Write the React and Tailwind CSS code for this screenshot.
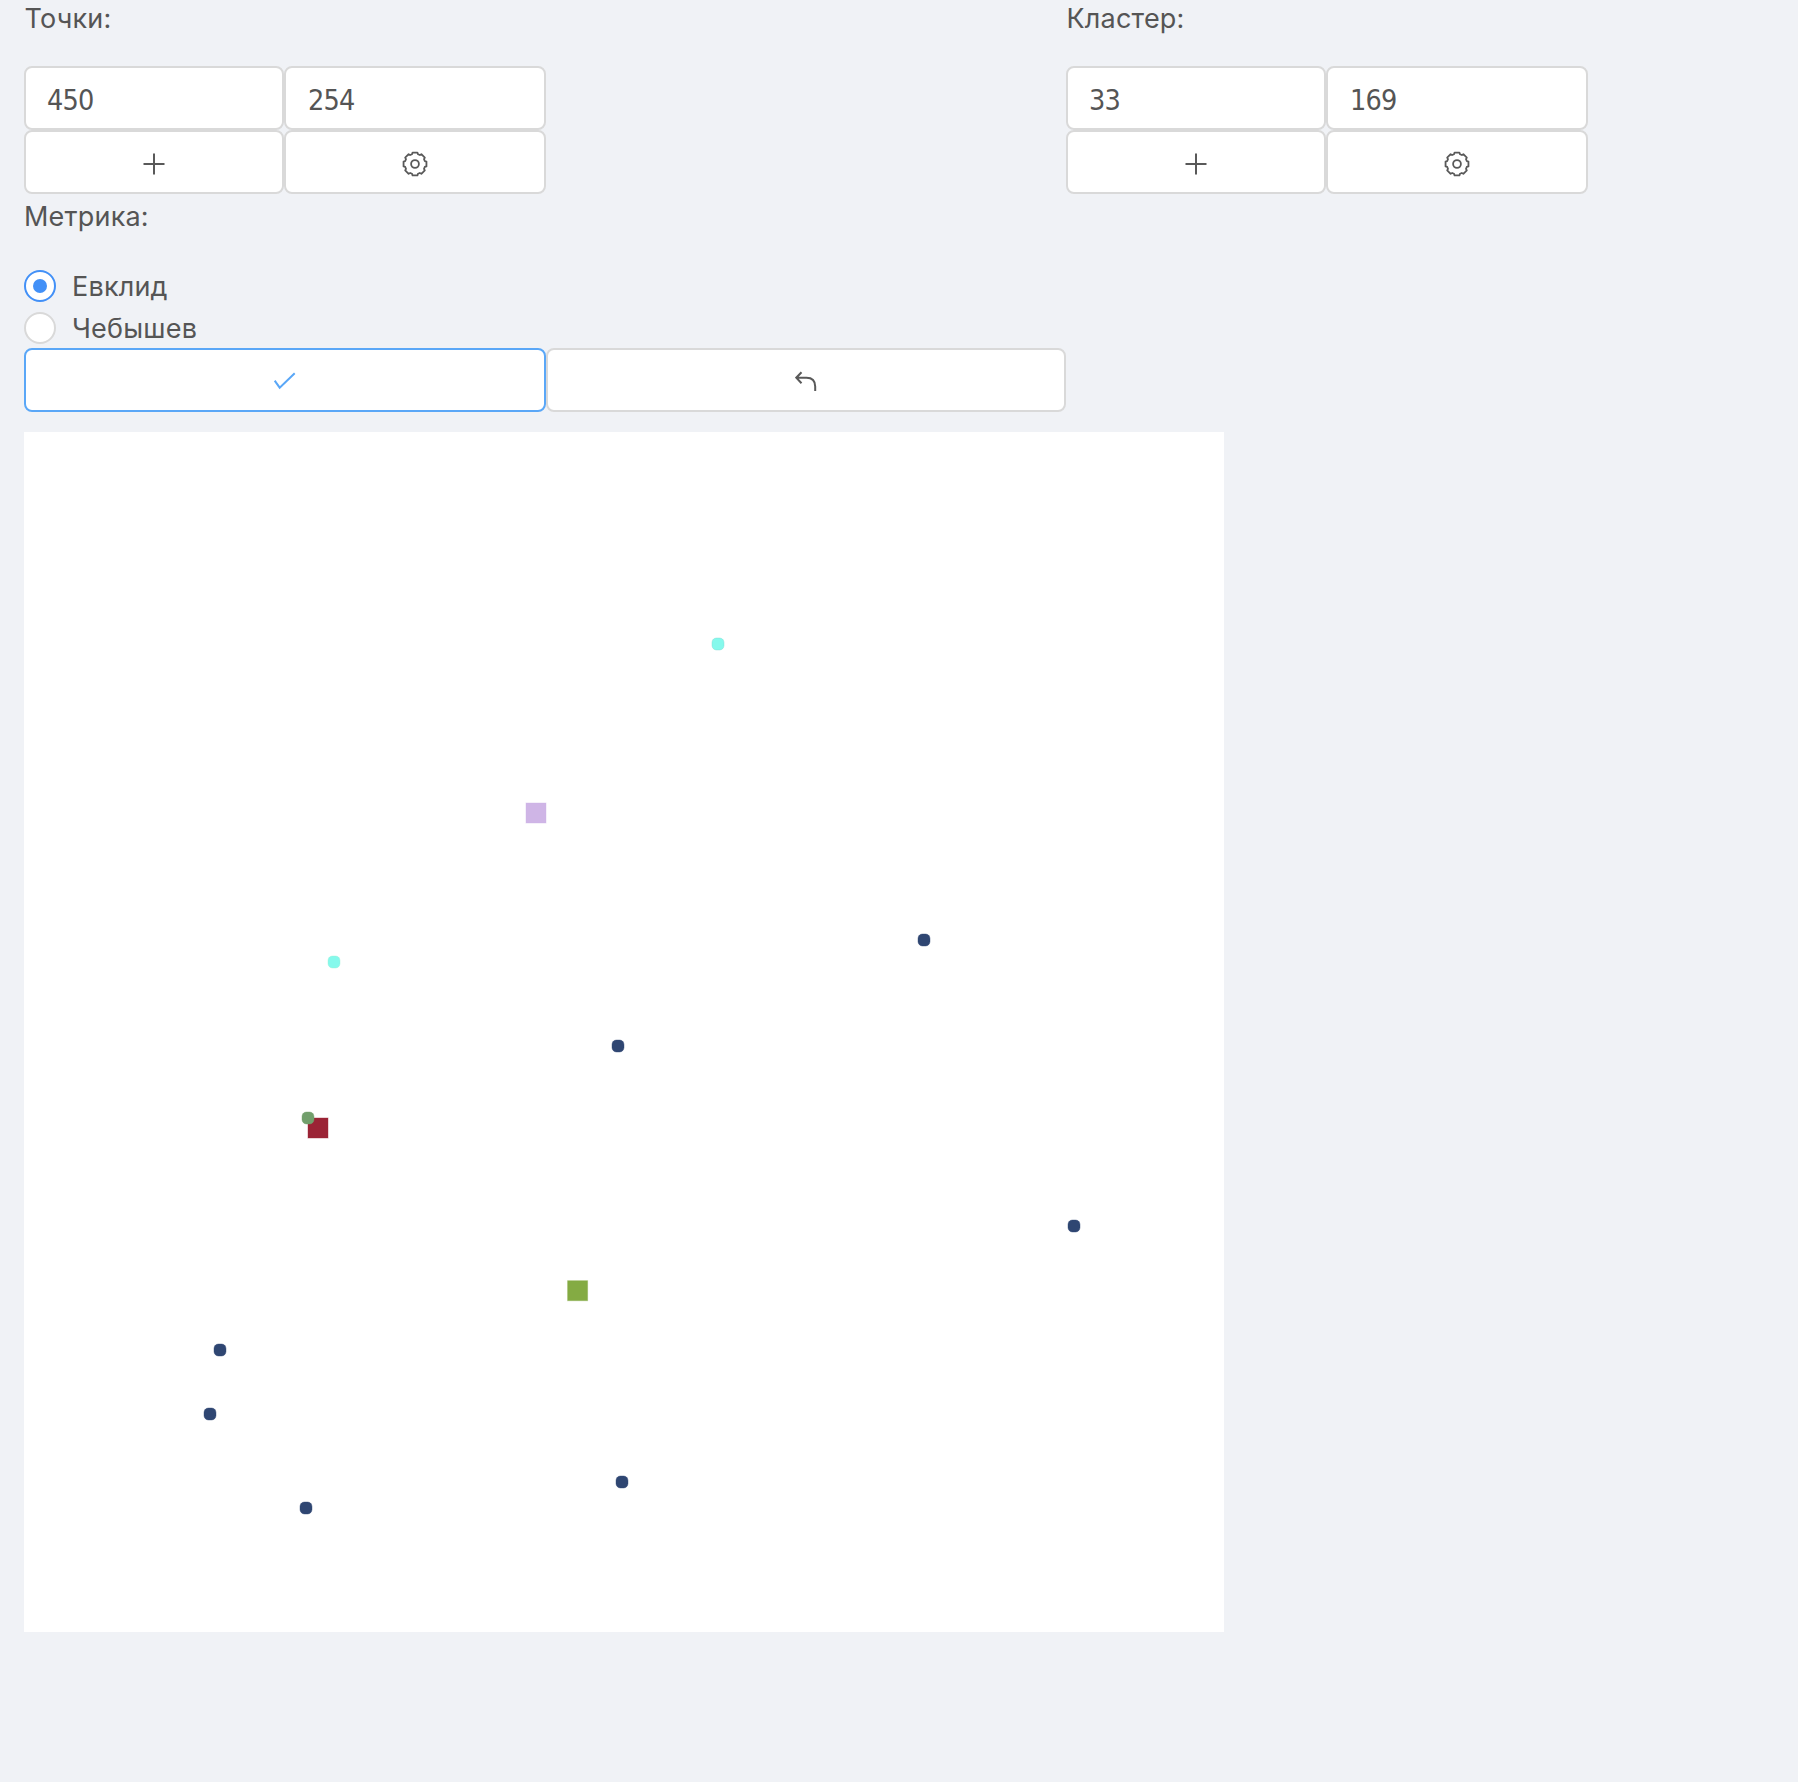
import React from 'react';

const LABEL = 'font-[Inter,sans-serif] text-[27px] leading-[42px] tracking-[0.2px] text-[#555555]';

function Plus() {
  return (
    <svg width="22" height="22" viewBox="0 0 22 22" fill="none" stroke="#595959" strokeWidth="2">
      <path d="M11 .5v21M.5 11h21" />
    </svg>
  );
}

// Eight flat teeth: each contributes two outer and two inner corners.
const gearPoints = Array.from({ length: 8 }, (_, i) =>
  [[-12, 11.7], [12, 11.7], [17, 10.2], [28, 10.2]]
    .map(([deg, r]) => {
      const t = ((i * 45 + deg) * Math.PI) / 180;
      return `${(13 + r * Math.cos(t)).toFixed(2)},${(13 + r * Math.sin(t)).toFixed(2)}`;
    })
    .join(' ')
).join(' ');

function Gear() {
  return (
    <svg width="26" height="26" viewBox="0 0 26 26" fill="none" stroke="#595959" strokeWidth="1.8" strokeLinejoin="round">
      <polygon points={gearPoints} />
      <circle cx="13" cy="13" r="3.9" />
    </svg>
  );
}

function Panel({ title, x, y }) {
  const cell = 'h-16 rounded-lg border-2 border-[#d9d9d9] bg-white flex items-center';
  const field = 'min-w-0 pt-1 outline-none font-[DejaVu_Sans_Condensed,sans-serif] text-[28.5px] tracking-[-0.8px] text-[#555555]';
  return (
    <section className="w-[522px]">
      <h2 className={`${LABEL} mb-[26px] pt-0.5 pl-[0.5px]`}>{title}</h2>
      <div className="grid grid-cols-[260px_262px]">
        <input className={`${cell} ${field} pl-[21px]`} defaultValue={x} />
        <input className={`${cell} ${field} pl-[22px]`} defaultValue={y} />
        <button className={`${cell} justify-center pt-[3px]`}><Plus /></button>
        <button className={`${cell} justify-center pt-[3px] pr-px`}><Gear /></button>
      </div>
    </section>
  );
}

function Radio({ label, checked }) {
  return (
    <label className="flex h-[42px] items-center gap-4 pt-0.5">
      <span className={`flex size-8 items-center justify-center rounded-full border-2 bg-white ${checked ? 'border-[#4290f7]' : 'border-[#d9d9d9]'}`}>
        {checked && <span className="size-3.5 rounded-full bg-[#4290f7]" />}
      </span>
      <span className={`${LABEL} pt-0.5`}>{label}</span>
    </label>
  );
}

const clusters = [
  [512, 381, '#cfb5e6'],
  [294, 696, '#9b2335'],
  [553.6, 858.7, '#84ab43'],
];

const points = [
  [694, 212, '#85f9ec', '#7fd6d2'],
  [310, 530, '#85f9ec', '#9af0d4'],
  [284, 686, '#729f6c', '#729f6c'],
  [900, 508, '#2f4672', '#2f4672'],
  [594, 614, '#2f4672', '#2f4672'],
  [1050, 794, '#2f4672', '#2f4672'],
  [196, 918, '#2f4672', '#2f4672'],
  [186, 982, '#2f4672', '#2f4672'],
  [282, 1076, '#2f4672', '#2f4672'],
  [598, 1050, '#2f4672', '#2f4672'],
];

export default function App() {
  return (
    <main className="flex h-[1782px] w-[1798px] flex-col overflow-hidden bg-[#f0f2f6] pl-6">
      <div className="-mt-1 flex gap-[520px]">
        <Panel title="Точки:" x="450" y="254" />
        <Panel title="Кластер:" x="33" y="169" />
      </div>
      <h2 className={`${LABEL} mb-[26px] pt-0.5`}>Метрика:</h2>
      <Radio label="Евклид" checked />
      <Radio label="Чебышев" />
      <div className="grid grid-cols-[522px_520px]">
        <button className="flex h-16 items-center justify-center rounded-lg border-2 border-[#5aa7f7] bg-white pt-0.5 pr-px">
          <svg width="22" height="18" viewBox="0 0 22 18" fill="none" stroke="#5aa7f7" strokeWidth="2">
            <path d="M.7 8.7l5 7L20.7 1.2" />
          </svg>
        </button>
        <button className="flex h-16 items-center justify-center rounded-lg border-2 border-[#d9d9d9] bg-white">
          <svg width="22" height="24" viewBox="0 0 22 24" fill="none" stroke="#595959" strokeWidth="2">
            <path d="M6.5 4.2L1.3 9.7L6.5 15.2M1.3 9.7H11.5Q20.2 9.7 20.2 18.5V23" />
          </svg>
        </button>
      </div>
      <svg className="mt-5 block shrink-0 bg-white" width="1200" height="1200" viewBox="0 0 1200 1200">
        {clusters.map(([x, y, c]) => (
          <rect key={`${x}-${y}`} x={x - 10} y={y - 10} width="20" height="20" fill={c} stroke={c} strokeOpacity="0.4" />
        ))}
        {points.map(([x, y, c, edge]) => (
          <rect key={`${x}-${y}`} x={x - 6} y={y - 6} width="12" height="12" rx="4.5" fill={c} stroke={edge} strokeOpacity="0.4" />
        ))}
      </svg>
    </main>
  );
}
